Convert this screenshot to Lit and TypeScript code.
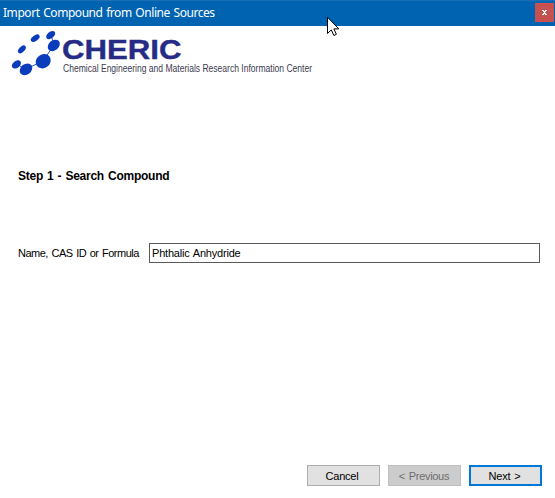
import { LitElement, html, css } from "lit";
import { customElement } from "lit/decorators.js";

@customElement("app-root")
export class AppRoot extends LitElement {
  static styles = css`
    :host {
      display: flex;
      flex-direction: column;
      position: relative;
      box-sizing: border-box;
      width: 555px;
      height: 498px;
      background: #fff;
      color: #000;
      font: 11px/16px "Liberation Sans", sans-serif;
      letter-spacing: -0.2px;
      word-spacing: 1px;
      overflow: hidden;
    }
    .bar {
      box-sizing: border-box;
      height: 26px;
      background: #0063b1;
      border-top: 1px solid #1a6fb5;
      display: flex;
      justify-content: space-between;
      align-items: flex-start;
      padding: 2px 1px 0 3px;
      color: #fff;
      flex: none;
    }
    .title {
      font: 12px/20px "Noto Sans", sans-serif;
      letter-spacing: -0.45px;
      white-space: nowrap;
    }
    .close {
      width: 19px;
      height: 19px;
      background: #c75050;
      display: block;
    }
    .logo {
      display: block;
      flex: none;
      overflow: visible;
      letter-spacing: 0;
      word-spacing: 0;
    }
    .step {
      margin: 82px 0 0 18px;
      font-size: 12px;
      line-height: 16px;
      font-weight: 700;
      letter-spacing: -0.25px;
    }
    .field {
      display: flex;
      align-items: center;
      margin: 59px 15px 0 18px;
    }
    .label {
      width: 131px;
      flex: none;
      white-space: nowrap;
      letter-spacing: -0.5px;
    }
    .input {
      box-sizing: border-box;
      flex: 1;
      height: 20px;
      border: 1px solid #5a5a5a;
      padding-left: 2px;
      line-height: 18px;
    }
    .actions {
      margin: auto 13px 12px 0;
      display: flex;
      justify-content: flex-end;
      gap: 8px;
    }
    .btn {
      box-sizing: border-box;
      width: 73px;
      height: 21px;
      border: 1px solid #adadad;
      background: #e1e1e1;
      line-height: 20px;
      display: flex;
      justify-content: center;
      padding-right: 3px;
    }
    .off {
      background: #ccc;
      border-color: #bfbfbf;
      color: #6d6d6d;
      padding-right: 1px;
      letter-spacing: -0.3px;
    }
    .main {
      border: 2px solid #0078d7;
      line-height: 18px;
      padding-right: 2px;
    }
    .cursor {
      position: absolute;
      left: 327px;
      top: 16px;
    }
    .brand {
      font: 700 28.5px "Liberation Sans", sans-serif;
      fill: #262b85;
      stroke: #262b85;
      stroke-width: 0.4px;
    }
    .tag {
      font: 10px "Liberation Sans", sans-serif;
      fill: #3c3c50;
    }
  `;

  render() {
    return html`
      <header class="bar">
        <span class="title">Import Compound from Online Sources</span>
        <svg class="close" viewBox="0 0 19 19" shape-rendering="crispEdges">
          <path fill="#fff" d="M7 7h2v1h1v-1h2v1h-1v1h-1v1h1v1h1v1h-2v-1h-1v1h-2v-1h1v-1h1v-1h-1v-1h-1z" />
        </svg>
      </header>
      <svg class="logo" width="330" height="60" viewBox="0 26 330 60">
        <path d="M16 64L26 69L43 61L54 45L51 35" fill="none" stroke="#2a58c4" />
        <g fill="#0a3cbc">
          <ellipse cx="21.9" cy="49.4" rx="4.8" ry="2.7" transform="rotate(-45 21.9 49.4)" />
          <ellipse cx="35.2" cy="38.2" rx="5" ry="2.8" transform="rotate(-35 35.2 38.2)" />
          <ellipse cx="50.7" cy="35.1" rx="5.2" ry="3.2" transform="rotate(-38 50.7 35.1)" />
          <ellipse cx="53.8" cy="45.4" rx="6.7" ry="5" transform="rotate(-40 53.8 45.4)" />
          <ellipse cx="43.2" cy="61.2" rx="7.9" ry="6.8" transform="rotate(-35 43.2 61.2)" />
          <ellipse cx="26" cy="69.3" rx="6.8" ry="5.3" transform="rotate(-38 26 69.3)" />
          <ellipse cx="16.4" cy="64.4" rx="5.1" ry="3.5" transform="rotate(-38 16.4 64.4)" />
        </g>
        <text class="brand" x="62" y="59" textLength="119.5" lengthAdjust="spacingAndGlyphs">CHERIC</text>
        <text class="tag" x="63" y="71.5" textLength="249" lengthAdjust="spacingAndGlyphs">Chemical Engineering and Materials Research Information Center</text>
      </svg>
      <div class="step">Step 1 - Search Compound</div>
      <div class="field">
        <span class="label">Name, CAS ID or Formula</span>
        <div class="input">Phthalic Anhydride</div>
      </div>
      <footer class="actions">
        <div class="btn">Cancel</div>
        <div class="btn off">&lt; Previous</div>
        <div class="btn main">Next &gt;</div>
      </footer>
      <svg class="cursor" width="13" height="21" viewBox="0 0 13 21">
        <path fill="#fff" stroke="#000" d="M.5 1.2V17.5L4.3 13.9L6.9 19.5L9.4 18.3L6.9 12.9H11.8Z" />
      </svg>
    `;
  }
}
